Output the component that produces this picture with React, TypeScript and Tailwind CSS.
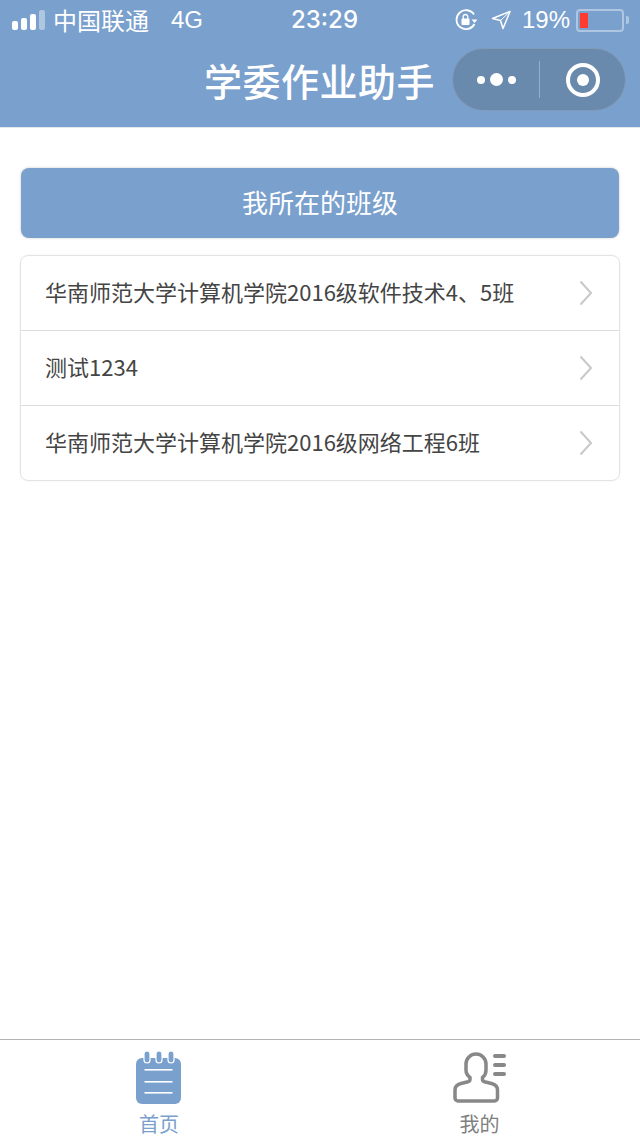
const FONT = "font-['Noto_Sans_CJK_SC','Noto_Sans',sans-serif]";

const CLASSES = [
  '华南师范大学计算机学院2016级软件技术4、5班',
  '测试1234',
  '华南师范大学计算机学院2016级网络工程6班',
];

function StatusBar() {
  return (
    <div className="flex h-10 items-center pl-3 pr-[11px] text-white">
      <div className="flex w-[279px] items-center">
        <div className="flex items-end gap-[3px]">
          <span className="h-[9px] w-[6px] rounded-[2px] bg-white" />
          <span className="h-[12px] w-[6px] rounded-[2px] bg-white" />
          <span className="h-[16px] w-[6px] rounded-[2px] bg-white" />
          <span className="h-[20px] w-[6px] rounded-[2px] bg-white/40" />
        </div>
        <span className="ml-[8px] text-[24px] leading-none">中国联通</span>
        <span className="ml-[22px] font-['Liberation_Sans',sans-serif] text-[24px] leading-none">4G</span>
      </div>
      <span className="font-['Inter',sans-serif] text-[24px] font-medium leading-none">23:29</span>
      <div className="flex flex-1 items-center justify-end">
        <svg width="24" height="22" viewBox="0 0 24 22" fill="none">
          <path d="M19 5.500A9.500 9.500 0 1 0 19.500 15" stroke="#fff" strokeWidth="1.800" />
          <path d="M16.500 10.500h6l-3 3.600z" fill="#fff" />
          <rect x="6.500" y="9.500" width="8" height="6.500" rx="1" fill="#fff" />
          <path d="M8.200 10V7.800a2.300 2.300 0 0 1 4.600 0V10" stroke="#fff" strokeWidth="1.300" />
        </svg>
        <svg className="ml-[12px]" width="20" height="20" viewBox="0 0 20 20" fill="none">
          <path d="M19 1.500 1.500 8.500l8 2 2.500 8z" stroke="#fff" strokeWidth="1.500" strokeLinejoin="round" />
          <path d="M19 1.500 9.500 10.500" stroke="#fff" strokeWidth="1" />
        </svg>
        <span className="ml-[11px] font-['Liberation_Sans',sans-serif] text-[24px] leading-none">19%</span>
        <div className="ml-[6px] flex h-[23px] w-[48px] items-center rounded-[4px] border-2 border-white/40 px-[2px]">
          <span className="h-[15px] w-[8px] bg-[#ff3b30]" />
        </div>
        <span className="ml-[2px] h-[8px] w-[3px] rounded-r-[2px] bg-white/40" />
      </div>
    </div>
  );
}

function Capsule() {
  return (
    <div className="flex h-[63px] w-[174px] items-center rounded-full border border-white/15 bg-[#6a8aad]">
      <div className="flex w-[86px] items-center justify-center gap-[5px]">
        <span className="h-[8px] w-[8px] rounded-full bg-white" />
        <span className="h-[13px] w-[13px] rounded-full bg-white" />
        <span className="h-[8px] w-[8px] rounded-full bg-white" />
      </div>
      <span className="h-[37px] w-px bg-white/30" />
      <div className="flex flex-1 items-center justify-center">
        <div className="flex h-[34px] w-[34px] items-center justify-center rounded-full border-[4px] border-white">
          <span className="h-[12px] w-[12px] rounded-full bg-white" />
        </div>
      </div>
    </div>
  );
}

function NotebookIcon() {
  return (
    <svg width="48" height="54" viewBox="0 0 48 54" fill="none">
      <rect x="1" y="8" width="45" height="46" rx="6" fill="#7aa0cd" />
      {[9, 21, 33].map((x) => (
        <rect key={x} x={x} y="1" width="6" height="12" rx="3" fill="#7aa0cd" stroke="#fff" strokeWidth="1.200" />
      ))}
      {[20, 32, 43].map((y) => (
        <rect key={y} x="9.500" y={y - 1} width="28" height="1.600" fill="#fff" />
      ))}
    </svg>
  );
}

function PersonIcon() {
  return (
    <svg width="54" height="52" viewBox="0 0 54 52" fill="none">
      <path
        d="M13 12a10 10 0 0 1 20 0v6c0 4-1.500 6-3.500 7.500v2c0 1.500 1 2 2 2.300l7 1.700c3.500.8 6 3 6 6.500v8a3 3 0 0 1-3 3H5a3 3 0 0 1-3-3v-8c0-3.500 2.500-5.700 6-6.500l7-1.700c1-.3 2-.8 2-2.300v-2c-2-1.500-4-3.500-4-7.500z"
        stroke="#888"
        strokeWidth="3.500"
        strokeLinejoin="round"
      />
      <rect x="40" y="2" width="13" height="4" rx="2" fill="#888" />
      <rect x="40" y="11" width="13" height="4" rx="2" fill="#888" />
      <rect x="40" y="20" width="13" height="4" rx="2" fill="#888" />
    </svg>
  );
}

export default function App() {
  return (
    <div className={`flex h-[1136px] w-[640px] flex-col bg-white ${FONT}`}>
      {/* Header */}
      <header className="h-[128px] border-b border-[#e4e8ee] bg-[#7aa0cd]">
        <StatusBar />
        <div className="flex items-center justify-end pr-[14px] pt-[8px]">
          <h1 className="mr-[17px] text-[38px] font-medium leading-none tracking-[0.5px] text-white">学委作业助手</h1>
          <Capsule />
        </div>
      </header>

      {/* Content */}
      <main className="flex-1 px-5 pt-[40px]">
        <div className="mx-px flex h-[70px] items-center justify-center rounded-[8px] bg-[#7aa0cd] pb-[4px] text-[26px] text-white shadow-[0_0_3px_rgba(0,0,0,0.2)]">
          我所在的班级
        </div>
        <ul className="mt-[17px] rounded-[8px] border border-[#e3e3e3] shadow-[0_0_2px_rgba(0,0,0,0.08)]">
          {CLASSES.map((name, i) => (
            <li
              key={name}
              className={`flex items-center justify-between pl-[24px] pr-[26px] text-[22px] text-[#444] ${i > 0 ? 'h-[75px] border-t border-[#dcdcdc]' : 'h-[74px]'}`}
            >
              <span className="pb-[4px]">{name}</span>
              <svg width="14" height="26" viewBox="0 0 14 26" fill="none">
                <path d="M1.500 1.500 12 13 1.500 24.500" stroke="#c8c8c8" strokeWidth="2" />
              </svg>
            </li>
          ))}
        </ul>
      </main>

      {/* Tab bar */}
      <nav className="grid h-[97px] grid-cols-2 border-t border-[#b4b4b4] bg-white">
        <div className="flex flex-col items-center pr-[2px] pt-[10px]">
          <NotebookIcon />
          <span className="mt-[9px] text-[20px] leading-[22px] text-[#7aa0cd]">首页</span>
        </div>
        <div className="flex flex-col items-center pr-[1px] pt-[12px]">
          <PersonIcon />
          <span className="mt-[9px] text-[20px] leading-[22px] text-[#7f7f7f]">我的</span>
        </div>
      </nav>
    </div>
  );
}
